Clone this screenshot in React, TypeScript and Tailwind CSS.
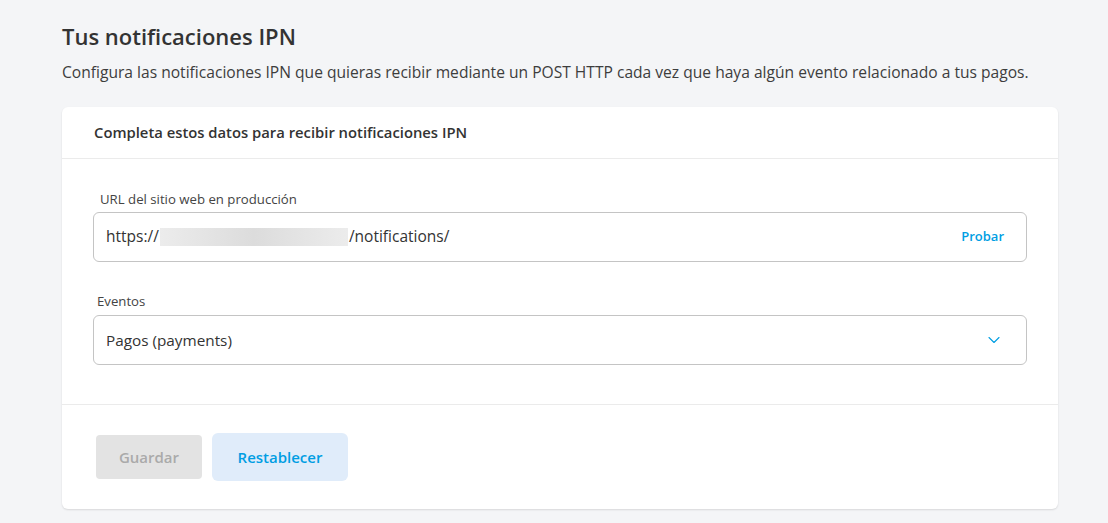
import { ChevronDown } from "lucide-react";

const font = { fontFamily: '"Open Sans", "Liberation Sans", sans-serif' };

export default function App() {
  return (
    <div className="min-h-[523px] bg-[#f4f5f7] px-[62px] pt-[22px] text-[#333]" style={font}>
      <h1 className="text-[22px] font-semibold leading-[28px] text-[#333]">Tus notificaciones IPN</h1>
      <p className="mt-[12px] text-[15.6px] leading-[20px] text-[#3d3d3d]">
        Configura las notificaciones IPN que quieras recibir mediante un POST HTTP cada vez que haya algún evento
        relacionado a tus pagos.
      </p>

      <section className="mt-[25px] w-[996px] rounded-md bg-white shadow-[0_1px_2px_rgba(0,0,0,0.12)]">
        <div className="flex h-[52px] items-center border-b border-[#ebebeb] px-8">
          <h2 className="text-[14.8px] font-semibold text-[#333]">Completa estos datos para recibir notificaciones IPN</h2>
        </div>

        <div className="px-[31px] pb-[39px] pt-[31px]">
          <label className="block pl-[7px] text-[13.2px] leading-[18px] text-[#444]">URL del sitio web en producción</label>
          <div className="mt-[4px] flex h-[50px] items-center rounded-md border border-[#c4c4c4] pl-3 pr-[22px]">
            <span className="flex items-center text-[15.5px] text-[#333]">
              https://
              <span className="mx-[1px] inline-block h-[18px] w-[188px] bg-gradient-to-r from-[#ececec] via-[#dcdcdc] to-[#ececec]" />
              /notifications/
            </span>
            <button type="button" className="ml-auto text-[13px] font-semibold text-[#009ee3]">
              Probar
            </button>
          </div>

          <label className="mt-[30px] block pl-[4px] text-[13.2px] leading-[18px] text-[#444]">Eventos</label>
          <div className="mt-[5px] flex h-[50px] items-center rounded-md border border-[#c4c4c4] pl-3 pr-[22px]">
            <span className="text-[15.3px] text-[#333]">Pagos (payments)</span>
            <ChevronDown className="ml-auto h-5 w-5 text-[#009ee3]" strokeWidth={1.3} />
          </div>
        </div>

        <div className="flex items-center gap-[10px] border-t border-[#ebebeb] px-[34px] pb-[28px] pt-[28px]">
          <button
            type="button"
            disabled
            className="h-[44px] w-[106px] rounded-[4px] bg-[#e3e3e3] text-[15px] font-semibold text-[#aaa]"
          >
            Guardar
          </button>
          <button
            type="button"
            className="h-[48px] w-[136px] rounded-md bg-[#e0ecfa] text-[15px] font-semibold text-[#009ee3]"
          >
            Restablecer
          </button>
        </div>
      </section>
    </div>
  );
}
